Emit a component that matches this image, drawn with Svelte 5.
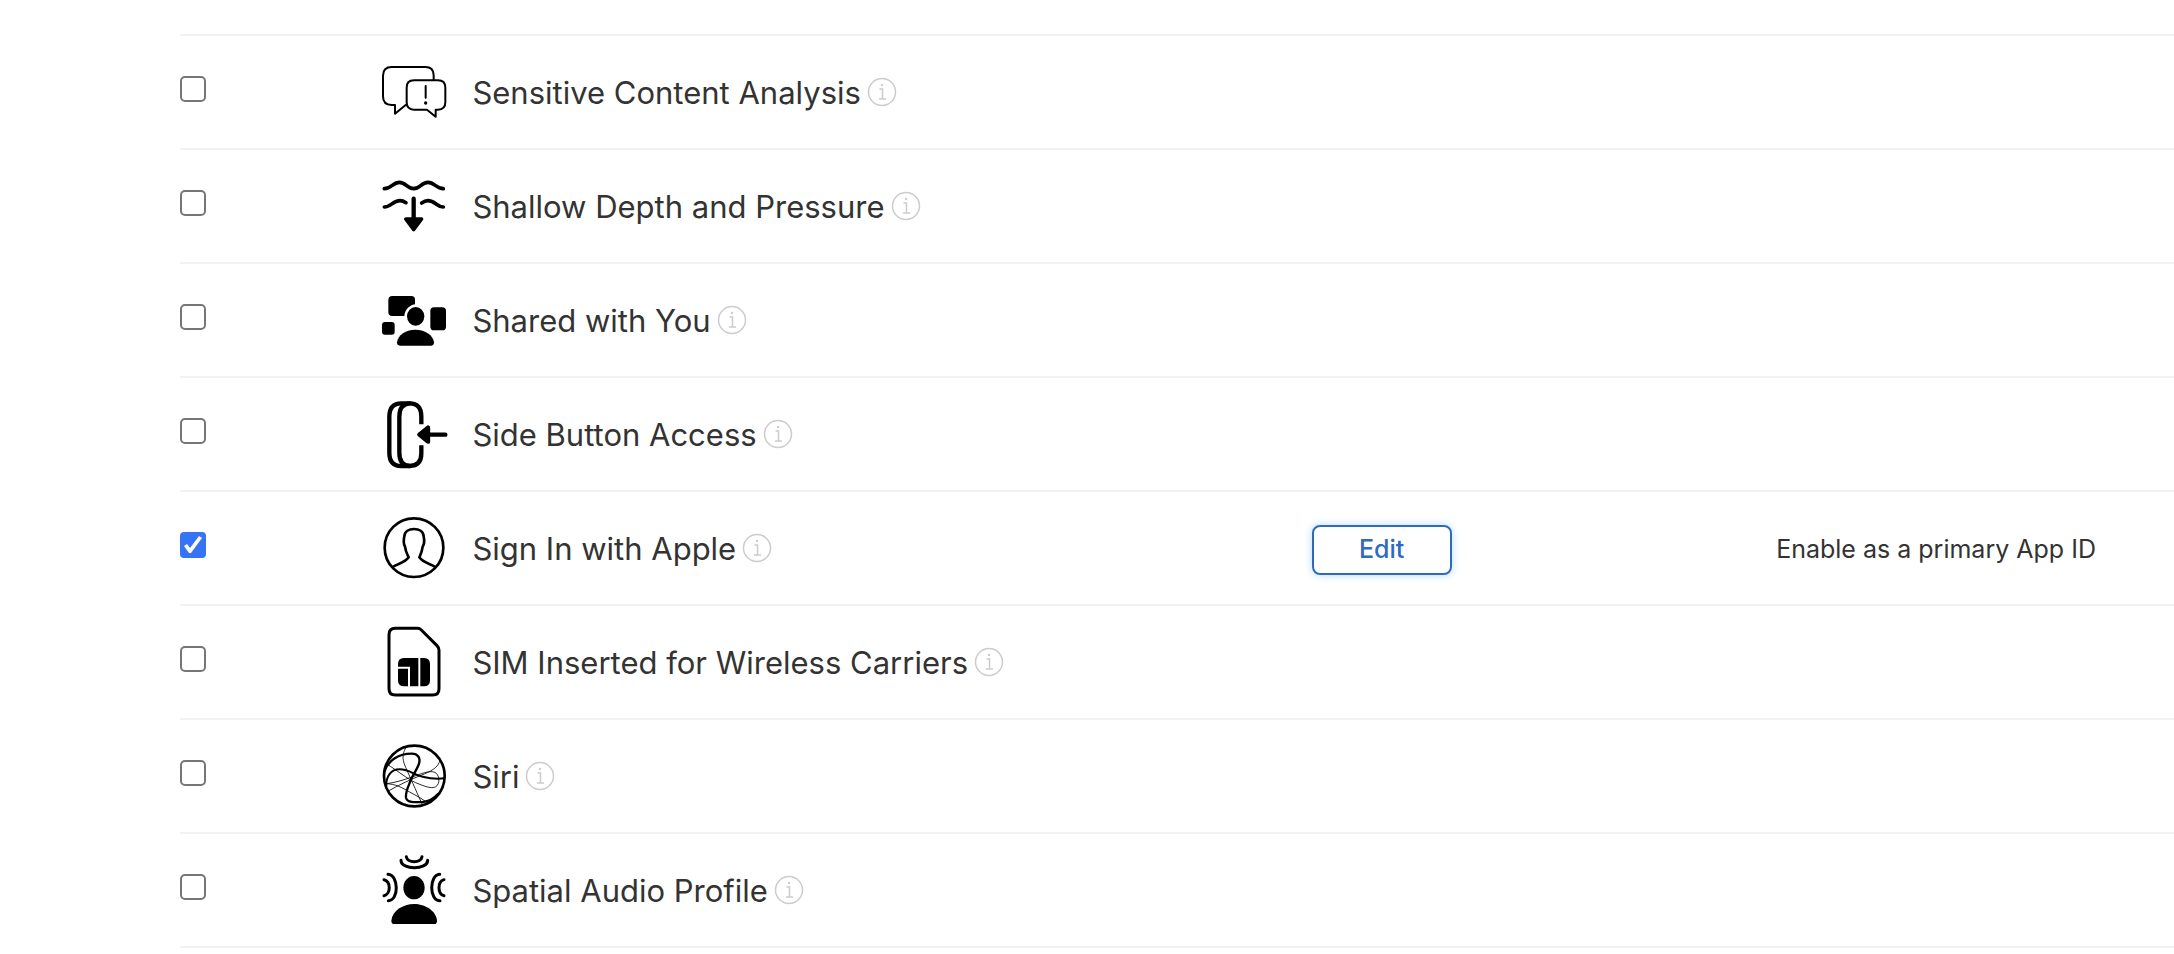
<script>
  let rows = $state([
    { id: 'sensitive', name: 'Sensitive Content Analysis', top: 6, on: false },
    { id: 'depth', name: 'Shallow Depth and Pressure', top: 3, on: false },
    { id: 'shared', name: 'Shared with You', top: 0, on: false },
    { id: 'side', name: 'Side Button Access', top: 12, on: false },
    { id: 'signin', name: 'Sign In with Apple', top: 9, on: true, action: 'Edit', note: 'Enable as a primary App ID' },
    { id: 'sim', name: 'SIM Inserted for Wireless Carriers', top: 21, on: false },
    { id: 'siri', name: 'Siri', top: 18, on: false },
    { id: 'spatial', name: 'Spatial Audio Profile', top: 15, on: false }
  ]);
</script>

<main>
  <table>
    <colgroup>
      <col class="c-check" /><col class="c-name" /><col class="c-action" /><col class="c-note" />
    </colgroup>
    <tbody>
      {#each rows as row (row.id)}
        <tr>
          <td class="check"><input type="checkbox" id={row.id} bind:checked={row.on} /></td>
          <td>
            <div class="name">
              <svg class="icon" viewBox="30 {row.top} 204 240" aria-hidden="true">
                {#if row.id === 'sensitive'}
                  <g class="line" stroke-width="6">
                    <path d="M191 88V76Q191 51 166 51H65Q39 51 39 77V139Q39 165 65 165H75V191L107 165" />
                    <path d="M132 91H204Q226 91 226 113V157Q226 179 204 179H197V200L171 179H132Q110 179 110 157V113Q110 91 132 91Z" />
                    <path d="M167 108V143" />
                  </g>
                  <circle cx="167" cy="159" r="5" />
                {:else if row.id === 'depth'}
                  <g class="line" stroke-width="11">
                    <path d="M43 71C65 71 68 52 88 52S112 71 131 71S154 52 174 52S198 71 220 71" />
                    <path d="M43 126C64 126 68 107 90 107Q99 107 108 113M220 126C200 126 196 107 174 107Q165 107 155 114" />
                    <path d="M131 101V165" stroke-width="13" />
                    <path d="M107 162H155L131 194Z" fill="#000" stroke-width="10" />
                  </g>
                {:else if row.id === 'shared'}
                  <path d="M67 48H124Q135 48 135 59V73C116 76 105 91 103 108H67Q55 108 55 96V60Q55 48 67 48Z" />
                  <rect x="36" y="126" width="38" height="38" rx="9" />
                  <rect x="181" y="82" width="47" height="69" rx="11" />
                  <ellipse cx="137" cy="109" rx="26" ry="28" />
                  <path d="M90 197Q81 197 81 187C84 166 105 149 136 149S189 166 192 187Q192 197 184 197Z" />
                {:else if row.id === 'side'}
                  <g class="line" stroke-width="13">
                    <path d="M154 103V80Q154 40 119 40H94Q58 40 58 80V188Q58 228 94 228H119Q154 228 154 190V166" stroke-linecap="butt" />
                    <path d="M119 40Q88 42 88 80V188Q88 226 119 228" />
                    <path d="M172 134H226" />
                    <path d="M148 134L174 113V155Z" fill="#000" />
                  </g>
                {:else if row.id === 'signin'}
                  <g class="line" stroke-width="8">
                    <circle cx="132" cy="128" r="88" />
                    <path d="M68 186C83 175 102 176 116 157C112 148 107 141 105 125C99 115 101 103 103 94C104 79 117 72 132 72S160 79 161 94C163 104 165 115 158 125C156 141 152 148 148 157C162 176 181 175 196 186" />
                  </g>
                {:else if row.id === 'sim'}
                  <path class="line" stroke-width="9" d="M76 40H143Q149 40 154 45L201 92Q207 98 207 106V221Q207 240 188 240H76Q57 240 57 221V59Q57 40 76 40Z" />
                  <path d="M102 129H145V214H120V155H84V147Q84 129 102 129Z" />
                  <path d="M151 129H162Q180 129 180 147V196Q180 214 162 214H151Z" />
                  <path d="M84 161H114V214H102Q84 214 84 196Z" />
                {:else if row.id === 'siri'}
                  <g class="line">
                    <circle cx="133" cy="138" r="91" stroke-width="8" />
                    <path stroke-width="7" d="M43 126C54 89 88 71 125 71C144 71 152 84 147 101C142 117 130 132 123 149C116 168 106 184 108 203C112 219 135 217 158 216C178 214 193 204 204 192" />
                    <path stroke-width="6" d="M49 168C48 140 62 118 89 118C119 118 130 134 158 140C181 146 202 147 223 145" />
                    <path stroke-width="2.5" d="M107 54C94 76 99 94 107 112C119 139 137 179 156 222" />
                    <path stroke-width="2.5" d="M52 103C82 122 111 146 137 158C166 170 182 176 196 171C213 162 208 132 194 127C179 120 152 132 126 141C98 151 75 158 44 162" />
                    <path stroke-width="2.5" d="M57 182C88 164 123 148 153 136C181 124 204 116 211 89" />
                    <path stroke-width="2.5" d="M47 161C76 161 96 173 119 186S156 205 172 219" />
                  </g>
                {:else}
                  <ellipse cx="132" cy="128" rx="32" ry="35" />
                  <path d="M73 237Q64 237 64 227C67 197 99 177 132 177S198 197 201 227Q201 237 193 237Z" />
                  <g class="line" stroke-width="9">
                    <path d="M93 46C94 76 172 76 173 46M109 35C112 55 153 55 156 35" />
                    <path d="M54 88C87 90 87 167 55 167M42 104C63 109 63 148 42 152" />
                    <path d="M209 88C177 90 177 167 210 167M222 104C202 109 202 148 222 152" />
                  </g>
                {/if}
              </svg>
              <label for={row.id}>{row.name}</label>
              <button class="info" type="button" aria-label="About {row.name}">
                <svg viewBox="0 0 30 30" aria-hidden="true">
                  <circle cx="15" cy="15" r="13.5" />
                  <path d="M12.5 12H15.5V22M12 22H19" />
                  <circle class="dot" cx="15" cy="8" r="1.2" />
                </svg>
              </button>
            </div>
          </td>
          <td>{#if row.action}<button class="edit" type="button">{row.action}</button>{/if}</td>
          <td class="note">{row.note ?? ''}</td>
        </tr>
      {/each}
    </tbody>
  </table>
</main>

<style>
  :global(body) {
    background: #fff;
  }
  main {
    padding: 34px 0 0 180px;
    font-family: Inter, "Liberation Sans", sans-serif;
    color: #333;
    overflow: hidden;
  }
  table {
    width: 100%;
    table-layout: fixed;
    border-spacing: 0;
    border-top: 2px solid #f2f2f2;
  }
  .c-check { width: 10.05%; }
  .c-name { width: 46.7%; }
  .c-action { width: 23.3%; }
  td {
    box-sizing: border-box;
    height: 114px;
    padding: 0;
    border-bottom: 2px solid #f2f2f2;
    vertical-align: middle;
  }
  .check {
    vertical-align: top;
    padding-top: 40px;
  }
  input {
    appearance: none;
    display: block;
    box-sizing: border-box;
    width: 26px;
    height: 26px;
    margin: 0;
    border: 2px solid #767676;
    border-radius: 5px;
    background: #fff;
  }
  input:checked {
    border: 0;
    border-radius: 4px;
    background: #3673f5;
  }
  input:checked::before {
    content: "";
    display: block;
    width: 26px;
    height: 26px;
    background: #fff;
    clip-path: polygon(4px 14px, 7px 12px, 10px 16px, 19px 4px, 22px 6px, 11px 21px, 9px 21px);
  }
  .name {
    display: flex;
    align-items: center;
  }
  .icon {
    width: 68px;
    height: 80px;
    margin-right: 24px;
    flex: none;
  }
  .line {
    fill: none;
    stroke: #000;
    stroke-linecap: round;
    stroke-linejoin: round;
  }
  label {
    padding-top: 2px;
    font-size: 31px;
    line-height: 40px;
    white-space: nowrap;
  }
  .info {
    width: 30px;
    height: 30px;
    margin-left: 6px;
    padding: 0;
    border: 0;
    background: none;
    flex: none;
  }
  .info svg {
    display: block;
    fill: none;
    stroke: #ccc;
    stroke-width: 1.5;
  }
  .info .dot {
    fill: #ccc;
    stroke: none;
  }
  .edit {
    display: block;
    width: 140px;
    height: 50px;
    margin-top: 4px;
    padding: 0 0 2px;
    border: 2px solid #2f6bbd;
    border-radius: 8px;
    background: #fff;
    box-shadow: 0 0 8px #b5dcfb;
    color: #2f6bbd;
    font: 500 25px/32px Inter, "Liberation Sans", sans-serif;
  }
  .note {
    padding-top: 2px;
    font-size: 25px;
    line-height: 32px;
    white-space: nowrap;
  }
</style>
